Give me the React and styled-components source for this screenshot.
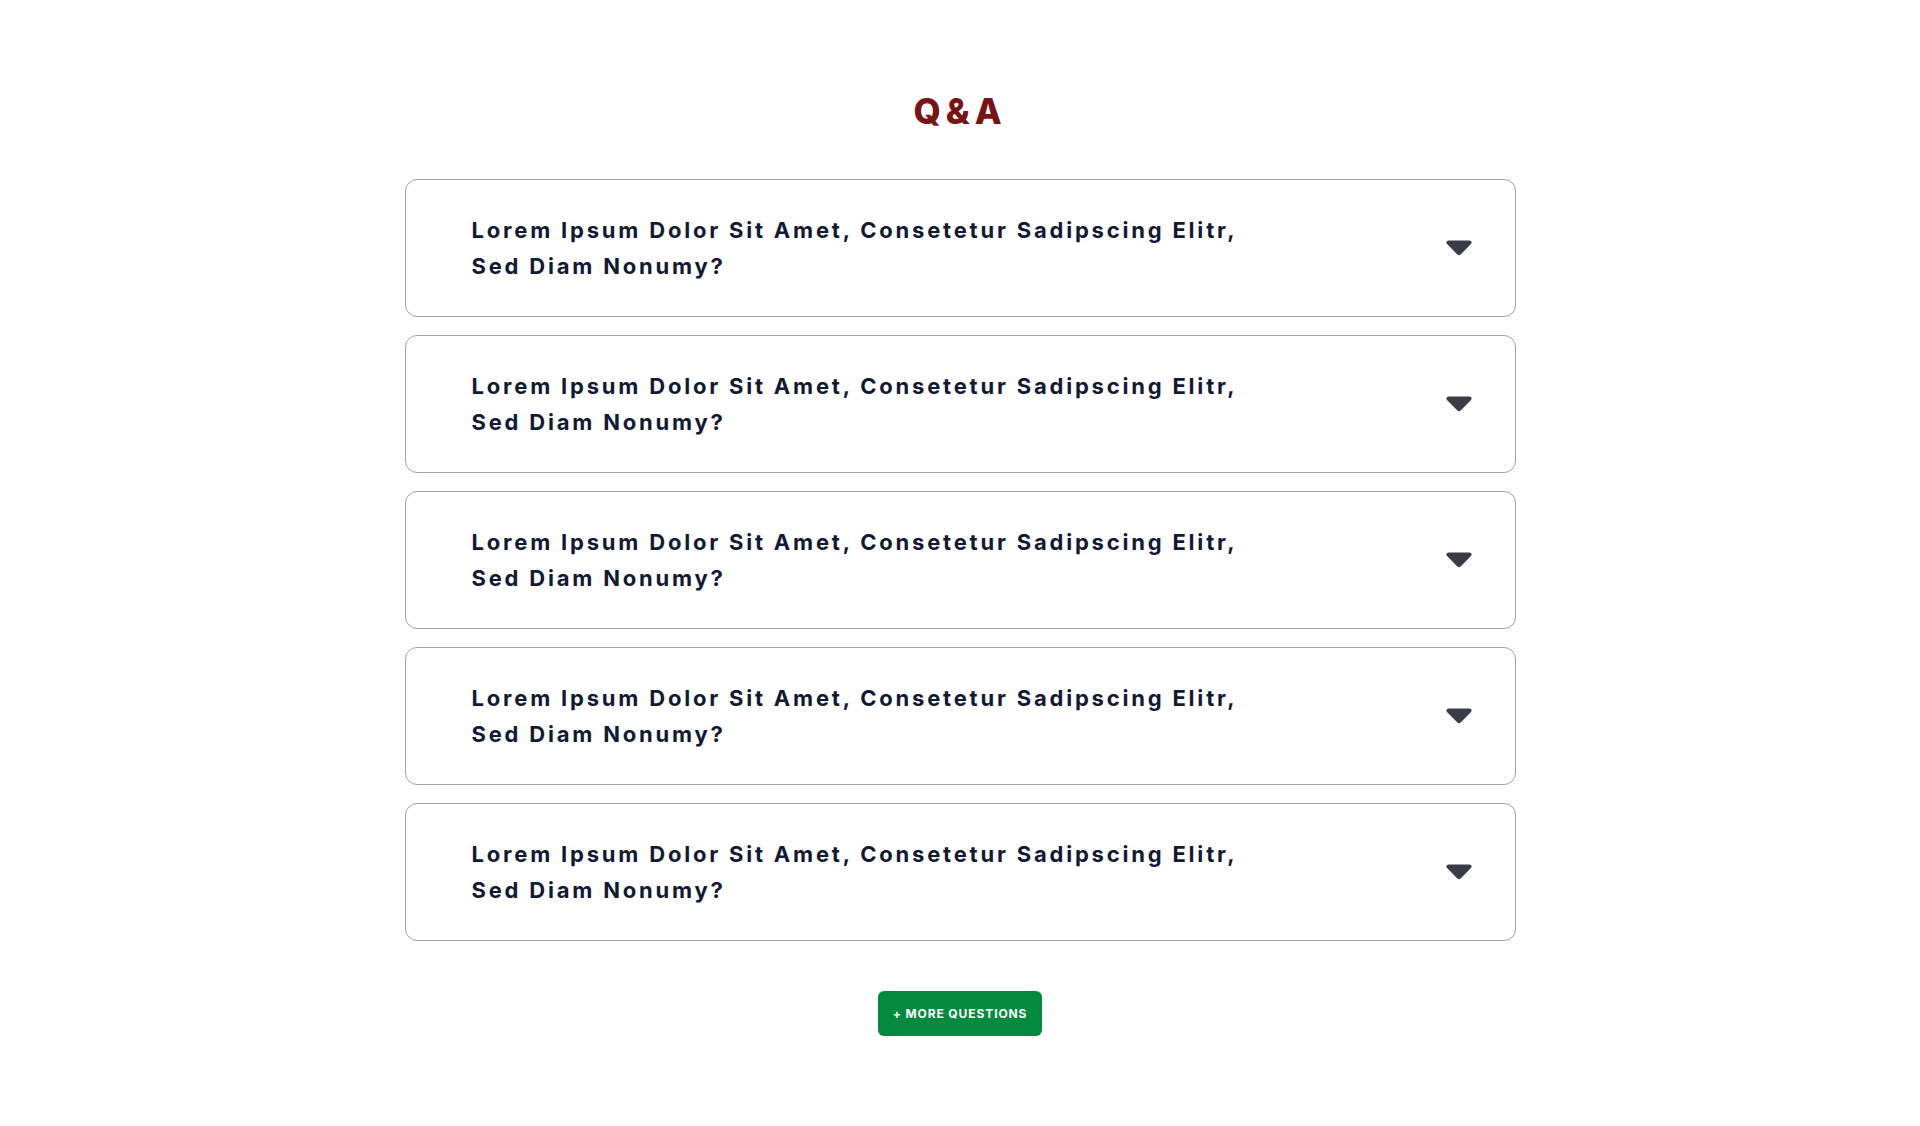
import React from 'react';
import styled, { createGlobalStyle } from 'styled-components';

const GlobalStyle = createGlobalStyle`
  * {
    box-sizing: border-box;
  }
  body {
    margin: 0;
    background: #ffffff;
    font-family: 'Inter', 'Liberation Sans', sans-serif;
  }
`;

const Page = styled.main`
  display: flex;
  flex-direction: column;
  align-items: center;
  padding: 93px 0 80px;
`;

const Title = styled.h1`
  margin: 0 0 50px;
  font-size: 35px;
  line-height: 36px;
  font-weight: 800;
  letter-spacing: 5px;
  color: #7a1313;
`;

const List = styled.div`
  width: 1111px;
  display: flex;
  flex-direction: column;
  gap: 18px;
`;

const Item = styled.div`
  height: 138px;
  display: flex;
  align-items: center;
  justify-content: space-between;
  padding: 0 43px 0 66px;
  border: 1px solid #a3a3a3;
  border-radius: 12px;
  background: #fff;
`;

const Question = styled.p`
  margin: 0;
  max-width: 800px;
  font-size: 22px;
  line-height: 36px;
  font-weight: 700;
  letter-spacing: 2.8px;
  color: #121933;
`;

const Caret = styled.svg`
  width: 26px;
  height: 17px;
  flex-shrink: 0;
  fill: #3a3d48;
`;

const MoreButton = styled.button`
  margin-top: 50px;
  height: 45px;
  padding: 0 15px;
  border: none;
  border-radius: 6px;
  background: #038a3f;
  color: #fff;
  font-family: 'Inter', 'Liberation Sans', sans-serif;
  font-size: 12px;
  font-weight: 700;
  letter-spacing: 0.9px;
  text-transform: uppercase;
  cursor: pointer;
`;

const questions = Array.from({ length: 5 }, (_, i) => ({
  id: i,
  first: 'Lorem Ipsum Dolor Sit Amet, Consetetur Sadipscing Elitr,',
  second: 'Sed Diam Nonumy?',
}));

const CaretDown = () => (
  <Caret viewBox="0 0 26 17">
    <path d="M2.5 0.5 H23.5 C25.4 0.5 26.3 2.7 25 4 L14.6 14.6 C13.7 15.5 12.3 15.5 11.4 14.6 L1 4 C-0.3 2.7 0.6 0.5 2.5 0.5 Z" />
  </Caret>
);

const App = () => (
  <>
    <GlobalStyle />
    <Page>
      <Title>Q&amp;A</Title>
      <List>
        {questions.map((q) => (
          <Item key={q.id}>
            <Question>
              {q.first}
              <br />
              {q.second}
            </Question>
            <CaretDown />
          </Item>
        ))}
      </List>
      <MoreButton>+ More Questions</MoreButton>
    </Page>
  </>
);

export default App;
